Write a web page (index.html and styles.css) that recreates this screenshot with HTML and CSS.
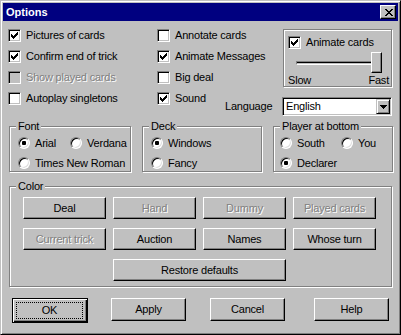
FILE: index.html
```html
<!DOCTYPE html>
<html>
<head>
<meta charset="utf-8">
<title>Options</title>
<link rel="stylesheet" href="styles.css">
</head>
<body>
<div class="window">
  <div class="titlebar">
    <span class="title">Options</span>
    <span class="close"><svg width="8" height="7" viewBox="0 0 8 7" shape-rendering="crispEdges"><path d="M0 0h2v1h-2zM6 0h2v1h-2zM1 1h2v1h-2zM5 1h2v1h-2zM2 2h4v1h-4zM3 3h2v1h-2zM2 4h4v1h-4zM1 5h2v1h-2zM5 5h2v1h-2zM0 6h2v1h-2zM6 6h2v1h-2z"/></svg></span>
  </div>
  <div class="body">
    <div class="top">
      <div class="chk c1 r1"><span class="box"><svg class="tick" width="7" height="7" viewBox="0 0 7 7" shape-rendering="crispEdges"><path d="M6 0h1v1h-1zM5 1h2v1h-2zM0 2h1v1h-1zM4 2h3v1h-3zM0 3h2v1h-2zM3 3h3v1h-3zM0 4h5v1h-5zM1 5h3v1h-3zM2 6h1v1h-1z"/></svg></span><span>Pictures of cards</span></div>
      <div class="chk c1 r2"><span class="box"><svg class="tick" width="7" height="7" viewBox="0 0 7 7" shape-rendering="crispEdges"><path d="M6 0h1v1h-1zM5 1h2v1h-2zM0 2h1v1h-1zM4 2h3v1h-3zM0 3h2v1h-2zM3 3h3v1h-3zM0 4h5v1h-5zM1 5h3v1h-3zM2 6h1v1h-1z"/></svg></span><span>Confirm end of trick</span></div>
      <div class="chk c1 r3"><span class="box off"></span><span class="dis">Show played cards</span></div>
      <div class="chk c1 r4"><span class="box"></span><span>Autoplay singletons</span></div>

      <div class="chk c2 r1"><span class="box"></span><span>Annotate cards</span></div>
      <div class="chk c2 r2"><span class="box"><svg class="tick" width="7" height="7" viewBox="0 0 7 7" shape-rendering="crispEdges"><path d="M6 0h1v1h-1zM5 1h2v1h-2zM0 2h1v1h-1zM4 2h3v1h-3zM0 3h2v1h-2zM3 3h3v1h-3zM0 4h5v1h-5zM1 5h3v1h-3zM2 6h1v1h-1z"/></svg></span><span>Animate Messages</span></div>
      <div class="chk c2 r3"><span class="box"></span><span>Big deal</span></div>
      <div class="chk c2s r4"><span class="box"><svg class="tick" width="7" height="7" viewBox="0 0 7 7" shape-rendering="crispEdges"><path d="M6 0h1v1h-1zM5 1h2v1h-2zM0 2h1v1h-1zM4 2h3v1h-3zM0 3h2v1h-2zM3 3h3v1h-3zM0 4h5v1h-5zM1 5h3v1h-3zM2 6h1v1h-1z"/></svg></span><span>Sound</span></div>

      <div class="lang-label">Language</div>
      <div class="combo">
        <span class="combo-text">English</span>
        <span class="combo-btn"><svg width="7" height="4" viewBox="0 0 7 4" shape-rendering="crispEdges"><path d="M0 0h7v1h-7zM1 1h5v1h-5zM2 2h3v1h-3zM3 3h1v1h-1z"/></svg></span>
      </div>

      <div class="group animate">
        <div class="chk small"><span class="box"><svg class="tick" width="7" height="7" viewBox="0 0 7 7" shape-rendering="crispEdges"><path d="M6 0h1v1h-1zM5 1h2v1h-2zM0 2h1v1h-1zM4 2h3v1h-3zM0 3h2v1h-2zM3 3h3v1h-3zM0 4h5v1h-5zM1 5h3v1h-3zM2 6h1v1h-1z"/></svg></span><span>Animate cards</span></div>
        <div class="slider">
          <div class="track"></div>
          <div class="thumb"></div>
        </div>
        <div class="scale"><span>Slow</span><span>Fast</span></div>
      </div>
    </div>

    <div class="groups">
      <div class="group g-font">
        <span class="legend">Font</span>
        <div class="rrow">
          <div class="opt w52"><span class="radio on"></span><span>Arial</span></div>
          <div class="opt"><span class="radio"></span><span>Verdana</span></div>
        </div>
        <div class="rrow">
          <div class="opt"><span class="radio"></span><span>Times New Roman</span></div>
        </div>
      </div>
      <div class="group g-deck">
        <span class="legend">Deck</span>
        <div class="rrow">
          <div class="opt"><span class="radio on"></span><span>Windows</span></div>
        </div>
        <div class="rrow">
          <div class="opt"><span class="radio"></span><span>Fancy</span></div>
        </div>
      </div>
      <div class="group g-player">
        <span class="legend">Player at bottom</span>
        <div class="rrow">
          <div class="opt w61"><span class="radio"></span><span>South</span></div>
          <div class="opt"><span class="radio"></span><span>You</span></div>
        </div>
        <div class="rrow">
          <div class="opt"><span class="radio on"></span><span>Declarer</span></div>
        </div>
      </div>
    </div>

    <div class="group g-color">
      <span class="legend">Color</span>
      <div class="color-grid">
        <div class="btn">Deal</div>
        <div class="btn dis">Hand</div>
        <div class="btn dis">Dummy</div>
        <div class="btn dis">Played cards</div>
        <div class="btn dis">Current trick</div>
        <div class="btn">Auction</div>
        <div class="btn">Names</div>
        <div class="btn">Whose turn</div>
        <div class="btn restore">Restore defaults</div>
      </div>
    </div>

    <div class="actions">
      <div class="btn default"><span class="focus">OK</span></div>
      <div class="btn act">Apply</div>
      <div class="btn act">Cancel</div>
      <div class="btn act">Help</div>
    </div>
  </div>
</div>
</body>
</html>
```

FILE: styles.css
```css
* { box-sizing: border-box; }
html, body { margin: 0; padding: 0; background: #c0c0c0; }
body {
  font-family: "Liberation Sans", Arial, sans-serif;
  font-size: 11px;
  line-height: 13px;
  color: #000;
  letter-spacing: -0.2px;
}
.window {
  width: 401px;
  height: 335px;
  background: #c0c0c0;
  border: 1px solid;
  border-color: #c0c0c0 #000 #000 #c0c0c0;
  box-shadow: inset 1px 1px #fff, inset -1px -1px #808080;
  padding: 2px;
}
.titlebar {
  height: 18px;
  background: #000080;
  display: flex;
  align-items: center;
  justify-content: space-between;
  padding: 0 2px 0 3px;
}
.title { color: #fff; font-weight: bold; letter-spacing: 0; }
.close {
  width: 16px;
  height: 14px;
  background: #c0c0c0;
  border: 1px solid;
  border-color: #fff #000 #000 #fff;
  box-shadow: inset -1px -1px #808080;
  display: flex;
  align-items: center;
  justify-content: center;
  padding-left: 1px;
}
.body { padding: 4px 0 0 5px; }

/* top area */
.top {
  display: grid;
  grid-template-columns: 149px 68px 57px 111px;
  grid-template-rows: 21px 21px 21px auto;
}
.c1 { grid-column: 1; }
.c2 { grid-column: 2 / span 2; }
.c2s { grid-column: 2; }
.r1 { grid-row: 1; }
.r2 { grid-row: 2; }
.r3 { grid-row: 3; }
.r4 { grid-row: 4; align-self: start; }

.chk { display: flex; align-items: center; gap: 5px; height: 21px; white-space: nowrap; }
.box {
  width: 13px; height: 13px; flex: none;
  background: #fff;
  border: 1px solid;
  border-color: #808080 #fff #fff #808080;
  box-shadow: inset 1px 1px #000, inset -1px -1px #c0c0c0;
  display: flex; align-items: center; justify-content: center;
}
.box.off { background: #c0c0c0; }
.tick { display: block; fill: #000; }
.dis { color: #808080; text-shadow: 1px 1px 0 #fff; }

.lang-label {
  grid-column: 3; grid-row: 4;
  margin-top: 9px; height: 19px;
  display: flex; align-items: center;
  white-space: nowrap;
}
.combo {
  grid-column: 4; grid-row: 4;
  margin-top: 9px;
  width: 110px; height: 19px;
  background: #fff;
  border: 1px solid;
  border-color: #808080 #fff #fff #808080;
  box-shadow: inset 1px 1px #000, inset -1px -1px #c0c0c0;
  display: flex; align-items: center;
  padding: 1px 1px 1px 3px;
}
.combo-text { flex: 1; }
.combo-btn {
  width: 14px; height: 15px;
  background: #c0c0c0;
  border: 1px solid;
  border-color: #c0c0c0 #000 #000 #c0c0c0;
  box-shadow: inset 1px 1px #fff, inset -1px -1px #808080;
  display: flex; align-items: center; justify-content: center;
}
.combo-btn svg { display: block; fill: #000; }

/* group boxes */
.group {
  position: relative;
  border: 1px solid #808080;
  box-shadow: inset 1px 1px #fff, 1px 1px #fff;
}
.legend {
  position: absolute;
  top: -7px;
  left: 6px;
  padding: 0 2px;
  background: #c0c0c0;
  white-space: nowrap;
}
.animate {
  grid-column: 4; grid-row: 1 / span 3;
  margin: 4px 0 0 1px;
  width: 109px; height: 58px;
  padding: 6px 1px 0 4px;
}
.chk.small { height: 13px; }
.slider { position: relative; height: 21px; margin-top: 3px; display: flex; align-items: center; }
.track {
  margin-left: 8px;
  width: 84px; height: 4px;
  border-top: 1px solid #808080;
  border-left: 1px solid #808080;
  border-bottom: 1px solid #fff;
  border-right: 1px solid #fff;
  box-shadow: inset 0 1px #000;
  background: #c0c0c0;
}
.thumb {
  position: absolute;
  left: 83px; top: 0;
  width: 11px; height: 21px;
  background: #c0c0c0;
  border: 1px solid;
  border-color: #fff #000 #000 #fff;
  box-shadow: inset -1px -1px #808080;
}
.scale { display: flex; justify-content: space-between; margin-top: 1px; padding-right: 1px; }

.groups { display: flex; gap: 11px; margin: 10px 0 0 1px; }
.g-font { width: 122px; height: 46px; padding: 9px 0 0 8px; }
.g-deck { width: 120px; height: 46px; padding: 9px 0 0 8px; }
.g-player { width: 120px; height: 46px; padding: 9px 0 0 6px; }
.rrow { display: flex; height: 14px; margin-bottom: 6px; }
.opt { display: flex; align-items: center; gap: 5px; white-space: nowrap; }
.w52 { width: 52px; }
.w61 { width: 61px; }
.radio {
  width: 12px; height: 12px; flex: none;
  border-radius: 50%;
  background: #fff;
  border: 1px solid;
  border-color: #808080 #fff #fff #808080;
  box-shadow: inset 1px 1px #000, inset -1px -1px #dfdfdf;
  display: flex; align-items: center; justify-content: center;
}
.radio.on::after { content: ""; width: 4px; height: 4px; border-radius: 1px; background: #000; }

.g-color {
  margin: 14px 0 0 1px;
  width: 383px; height: 101px;
  padding: 10px 0 0 13px;
}
.color-grid {
  display: grid;
  grid-template-columns: repeat(4, 83px);
  grid-auto-rows: 22px;
  column-gap: 7px;
  row-gap: 9px;
}
.restore { grid-column: 2 / span 2; }

.btn {
  display: flex; align-items: center; justify-content: center;
  background: #c0c0c0;
  border: 1px solid;
  border-color: #fff #000 #000 #fff;
  box-shadow: inset -1px -1px #808080;
  white-space: nowrap;
}
.actions {
  display: grid;
  grid-template-columns: 99px 99px 104px 75px;
  align-items: start;
  margin: 11px 0 0 4px;
}
.btn.act { width: 75px; height: 23px; }
.btn.default {
  width: 76px; height: 25px;
  border-color: #000;
  box-shadow: inset 1px 1px #fff, inset -1px -1px #000, inset -2px -2px #808080;
  padding: 3px 4px 3px 3px;
  align-items: stretch;
}
.focus {
  flex: 1;
  border: 1px dotted #000;
  display: flex; align-items: center; justify-content: center;
}
```
